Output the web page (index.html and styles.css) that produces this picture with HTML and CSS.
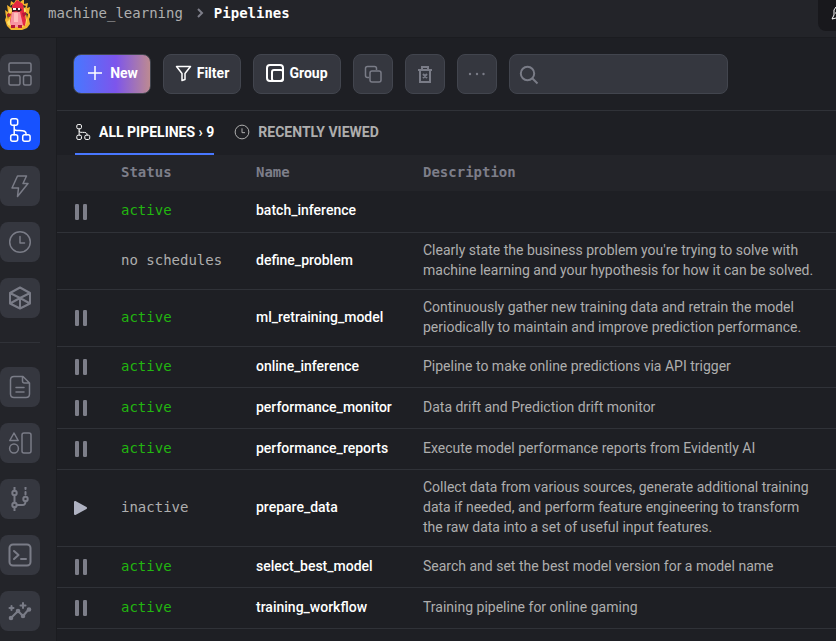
FILE: index.html
```html
<!DOCTYPE html>
<html lang="en">
<head>
<meta charset="utf-8">
<meta name="viewport" content="width=device-width, initial-scale=1">
<title>Pipelines</title>
<link rel="stylesheet" href="styles.css">
</head>
<body>
<svg class="defs" aria-hidden="true">
  <symbol id="tree" viewBox="0 0 24 24"><g fill="none" stroke="currentColor" stroke-width="1.5"><rect x="2.7" y=".8" width="7" height="6.4" rx="2"/><rect x="2.7" y="16.8" width="7" height="6.4" rx="2"/><rect x="14.7" y="16.8" width="7.4" height="6.4" rx="2"/><path d="M6.2 7.200v9.600M6.200 10c0 2.500 1.500 2.500 5 2.500 5 0 7 .5 7 4.300"/></g></symbol>
  <symbol id="clock" viewBox="0 0 24 24"><g fill="none" stroke="currentColor" stroke-width="1.5"><circle cx="12" cy="12" r="10.300"/><path d="M12 6.500V13h4.500"/></g></symbol>
  <symbol id="pause" viewBox="0 0 14 16"><rect x="1" width="4" height="16" rx="1.200"/><rect x="9" width="4" height="16" rx="1.200"/></symbol>
</svg>
<header class="topbar">
  <svg class="logo" viewBox="0 0 26 32" aria-label="Project logo" role="img">
    <path fill="#f5b52f" d="M3 28 1 22l1-3-1-7 3 2-1-7 3 2 1-6 3 2 3-5 3 4 4-3v5l4-1-1 5 3-1-1 6 2 2-2 4 1 5-3 4-5 2H7z"/>
    <path fill="#232429" d="m6 8 3-2-2 5zm13-1 3 1-2 4zM3 16l2 1-1 4zm19-1 2 1-1 4z"/>
    <path fill="#ffe16a" d="m3 24 3-3 1 7-3-1zm18-5 2 3-1 5-4 2zM5 12l2-3 1 4-3 4zm15-3 2 3-1 4-2-3z"/>
    <path fill="#e52842" d="m8 8 5-6 6 4 1 7 2 9-1 6-3-1-9 2-3-5 2-10z"/>
    <path fill="#f795a2" d="M8 14h8l3 13-4 2H8l-2-3z"/>
    <path fill="#391923" d="M8 10h8l2 2-3 2-3-1-4 1z"/>
    <path fill="#fff" d="M9 10h3v2H9zm5 0h2v2h-2z"/>
    <path fill="#b71839" d="m4 15 3 1-1 3-3-1zm14 0 4-1v3l-3 2zM7 27h4v3H7zm7 0h4v3h-4z"/>
    <path fill="#ffc0bd" d="M10 15h4v9h-4z"/>
  </svg>
  <nav class="crumbs" aria-label="Breadcrumb">
    <a href="#">machine_learning</a>
    <svg class="chevron" viewBox="0 0 10 12"><path d="m3 2 4 4-4 4"/></svg>
    <strong>Pipelines</strong>
  </nav>
  <button class="user" aria-label="Version"><svg viewBox="0 0 16 18"><path d="M5 2 3 5v5l-2 4 4-1m0-11 5 3v6l-4 3M4 8h4m-3 4 5 3"/></svg></button>
</header>
<div class="shell">
  <nav class="sidebar" aria-label="Main">
    <a href="#" aria-label="Overview"><svg viewBox="0 0 24 24"><rect x="1" y="1" width="22" height="9" rx="1.500"/><rect x="1" y="13.500" width="11" height="9.500" rx="1.500"/><rect x="15.500" y="13.500" width="7.500" height="9.500" rx="1.500"/></svg></a>
    <a href="#" class="current" aria-label="Pipelines"><svg><use href="#tree"/></svg></a>
    <a href="#" aria-label="Triggers"><svg viewBox="0 0 24 24"><path d="M9.500 2h9L15 9.500h5L9.500 22.500l1-8.500H4z"/></svg></a>
    <a href="#" aria-label="Runs"><svg><use href="#clock"/></svg></a>
    <a href="#" aria-label="Data products"><svg class="heavy" viewBox="0 0 24 24"><path d="m12 1.500 10 5.500v10.500L12 22.500 2 17.500V7zM12 12l10-5M12 12 2 7m10 5v10.500M12 12l10 5.500M12 12 2 17.500"/></svg></a>
    <hr>
    <a href="#" aria-label="Files"><svg viewBox="0 0 24 24"><path d="M6 1.500h9l6.500 6.500v11q0 3.500-3.500 3.500H6Q2.500 22.500 2.500 19V5Q2.500 1.500 6 1.500zM14.500 2v4q0 2 2 2h4.500M8 12.500h8M8 17h8"/></svg></a>
    <a href="#" aria-label="Templates"><svg viewBox="0 0 24 24"><path d="M6 2 1.800 9.500h8.400z"/><circle cx="6" cy="17.500" r="4.400"/><rect x="14" y="2" width="9" height="20" rx="2"/></svg></a>
    <a href="#" aria-label="Version control"><svg class="heavy" viewBox="0 0 24 24"><circle cx="6.500" cy="6" r="2.200"/><circle cx="6.500" cy="18" r="2.200"/><circle cx="17.500" cy="12" r="2.200"/><path d="M6.500 0v3.800m0 4.400v7.600m0 4.400v3.300M8.700 18h5.800q3 0 3-3.800M17.500 0v2m0 3v2.500"/></svg></a>
    <a href="#" aria-label="Terminal"><svg class="heavy" viewBox="0 0 24 24"><rect x="1.500" y="1.500" width="21" height="21" rx="3.500"/><path d="m6 8 4.500 4L6 16M13 16h5"/></svg></a>
    <a href="#" aria-label="Monitoring"><svg class="heavy" viewBox="0 0 24 24"><path d="m3 19 7-7 5 5 6-7"/><g fill="currentColor"><circle cx="3" cy="19" r="1.300"/><circle cx="10" cy="12" r="1.300"/><circle cx="15" cy="17" r="1.300"/><circle cx="21" cy="10.500" r="1.300"/></g><path d="M15 4v5m-2.500-2.500h5M3.500 7v4m-2-2h4"/></svg></a>
  </nav>
  <main>
    <div class="toolbar">
      <button class="btn primary"><svg class="plus" viewBox="0 0 14 14"><path d="M7 0v14M0 7h14"/></svg>New</button>
      <button class="btn filter"><svg viewBox="0 0 18 18"><path d="M1.500 2.500h14l-5.500 7v6l-3 1v-7z"/></svg>Filter</button>
      <button class="btn group"><svg viewBox="0 0 18 18"><rect x="1" y="1" width="16" height="16" rx="3"/><rect x="6" y="6" width="11" height="11" rx="2"/></svg>Group</button>
      <button class="btn icon" aria-label="Clone"><svg viewBox="0 0 18 18"><path d="M5 12.500H3.500Q1.500 12.500 1.500 10.500v-7q0-2 2-2h7q2 0 2 2V5"/><rect x="6" y="6" width="11" height="11" rx="2"/></svg></button>
      <button class="btn icon" aria-label="Delete"><svg class="bold" viewBox="0 0 18 18"><path d="M2 5h14M6 4V2h6v2M4 5v12h10V5M7 9l4 4m0-4-4 4"/></svg></button>
      <button class="btn icon" aria-label="More"><svg class="dots" viewBox="0 0 18 18"><circle cx="2" cy="9" r="1.200"/><circle cx="9" cy="9" r="1.200"/><circle cx="15.500" cy="9" r="1.200"/></svg></button>
      <label class="search"><svg viewBox="0 0 20 20"><circle cx="8.500" cy="8.500" r="6.700"/><path d="m13.500 13.500 5 5"/></svg><input type="search" aria-label="Search"></label>
    </div>
    <div class="tabs">
      <button class="tab selected"><svg><use href="#tree"/></svg>ALL PIPELINES › 9</button>
      <button class="tab"><svg><use href="#clock"/></svg>RECENTLY VIEWED</button>
    </div>
    <table>
      <colgroup><col class="c-action"><col class="c-status"><col class="c-name"><col></colgroup>
      <thead><tr><th></th><th>Status</th><th>Name</th><th>Description</th></tr></thead>
      <tbody>
        <tr><td><button aria-label="Pause"><svg><use href="#pause"/></svg></button></td><td class="on">active</td><td>batch_inference</td><td></td></tr>
        <tr><td></td><td>no schedules</td><td>define_problem</td><td>Clearly state the business problem you're trying to solve with<br>machine learning and your hypothesis for how it can be solved.</td></tr>
        <tr><td><button aria-label="Pause"><svg><use href="#pause"/></svg></button></td><td class="on">active</td><td>ml_retraining_model</td><td>Continuously gather new training data and retrain the model<br>periodically to maintain and improve prediction performance.</td></tr>
        <tr><td><button aria-label="Pause"><svg><use href="#pause"/></svg></button></td><td class="on">active</td><td>online_inference</td><td>Pipeline to make online predictions via API trigger</td></tr>
        <tr><td><button aria-label="Pause"><svg><use href="#pause"/></svg></button></td><td class="on">active</td><td>performance_monitor</td><td>Data drift and Prediction drift monitor</td></tr>
        <tr><td><button aria-label="Pause"><svg><use href="#pause"/></svg></button></td><td class="on">active</td><td>performance_reports</td><td>Execute model performance reports from Evidently AI</td></tr>
        <tr><td><button class="play" aria-label="Start"><svg viewBox="0 0 14 16"><path d="M1 2v12l11-6z"/></svg></button></td><td>inactive</td><td>prepare_data</td><td>Collect data from various sources, generate additional training<br>data if needed, and perform feature engineering to transform<br>the raw data into a set of useful input features.</td></tr>
        <tr><td><button aria-label="Pause"><svg><use href="#pause"/></svg></button></td><td class="on">active</td><td>select_best_model</td><td>Search and set the best model version for a model name</td></tr>
        <tr><td><button aria-label="Pause"><svg><use href="#pause"/></svg></button></td><td class="on">active</td><td>training_workflow</td><td>Training pipeline for online gaming</td></tr>
      </tbody>
    </table>
  </main>
</div>
</body>
</html>
```
FILE: styles.css
```css
* { box-sizing: border-box; }
body {
  margin: 0;
  min-height: 100vh;
  display: flex;
  flex-direction: column;
  background: #1e1f24;
  color: #aeaeae;
  font: 14px/20px Roboto, sans-serif;
}
button { font: inherit; color: inherit; background: none; border: 0; padding: 0; }
a { color: inherit; text-decoration: none; }
svg { display: block; flex: none; fill: none; stroke: currentColor; }
.defs { position: absolute; width: 0; height: 0; }

.topbar {
  display: flex;
  align-items: flex-start;
  height: 38px;
  padding-left: 4px;
  background: #232429;
  border-bottom: 1px solid #1b1c20;
  overflow: hidden;
}
.logo { width: 26px; height: 32px; margin-top: -2px; stroke: none; }
.crumbs {
  display: flex;
  align-items: center;
  height: 26px;
  margin-left: 18px;
  font-family: "DejaVu Sans Mono", monospace;
}
.crumbs strong { color: #fff; }
.chevron { width: 10px; height: 12px; margin: 0 9px 0 12px; stroke: #7d7e89; stroke-width: 2; }
.user {
  height: 31px;
  width: 48px;
  margin: 0 -30px 0 auto;
  padding-left: 13px;
  border-radius: 0 0 0 8px;
  background: #18181c;
  color: #fff;
}
.user svg { width: 16px; height: 18px; margin-bottom: 4px; }

.shell { display: flex; flex: 1; }
.sidebar {
  width: 57px;
  flex: none;
  display: flex;
  flex-direction: column;
  gap: 16px;
  padding-top: 16px;
  background: #232429;
  border-right: 1px solid #1b1c20;
}
.sidebar a {
  display: grid;
  place-items: center;
  width: 40px;
  height: 40px;
  border-radius: 8px;
  background: #35373f;
  color: #7a7c87;
}
.sidebar .current { background: #1752ff; color: #fff; }
.sidebar svg { width: 24px; height: 24px; stroke-width: 1.5; stroke-linejoin: round; stroke-linecap: round; }
.sidebar .heavy { stroke-width: 2; }
.sidebar hr { width: 40px; height: 1px; margin: 8px 0; border: 0; background: #303238; }

main { flex: 1; min-width: 0; }
.toolbar {
  display: flex;
  gap: 12px;
  padding: 16px;
  border-bottom: 1px solid #303238;
}
.btn {
  display: flex;
  align-items: center;
  justify-content: center;
  gap: 4px;
  height: 40px;
  padding-bottom: 2px;
  border: 1px solid #42454e;
  border-radius: 8px;
  background: #35373f;
  color: #fff;
  font-weight: 700;
}
.btn svg { width: 18px; height: 18px; stroke-width: 1.5; stroke-linejoin: round; }
.primary { gap: 8px; width: 78px; padding-left: 2px; background: linear-gradient(90deg, #4877ff, #7d55ec 55%, #bd8a91); }
.btn .plus { width: 14px; height: 14px; }
.filter { width: 78px; }
.group { width: 88px; gap: 5px; }
.group svg { stroke-width: 2; }
.icon { width: 40px; padding: 0; color: #7a7c87; }
.btn .bold { stroke-width: 2; stroke-linejoin: miter; }
.btn .dots { fill: currentColor; stroke: none; }
.search { position: relative; flex: 0 1 219px; }
.search svg { position: absolute; left: 10px; top: 11px; width: 20px; height: 20px; color: #7a7c87; stroke-width: 2; }
.search input {
  display: block;
  width: 100%;
  height: 40px;
  padding: 0 12px 0 40px;
  border: 1px solid #42454e;
  border-radius: 8px;
  background: #35373f;
  color: #fff;
  font: inherit;
}

.tabs { display: flex; gap: 20px; padding: 0 18px; }
.tab {
  display: flex;
  align-items: center;
  gap: 8px;
  height: 44px;
  border-bottom: 2px solid transparent;
  font-weight: 700;
}
.tab svg { width: 16px; height: 16px; }
.selected { color: #fff; border-color: #4877ff; }

table { width: 100%; border-collapse: collapse; table-layout: fixed; }
.c-action { width: 48px; }
.c-status { width: 135px; }
.c-name { width: 167px; }
th, td { padding: 7px 0 9px 16px; text-align: left; }
th {
  height: 36px;
  background: #232429;
  color: #7d7e89;
  font: 700 14px/20px "DejaVu Sans Mono", monospace;
}
td { height: 41px; border-bottom: 1px solid #303238; }
td:first-child { padding: 1px 0 0 17px; }
td:nth-child(2) { font-family: "DejaVu Sans Mono", monospace; }
td:nth-child(3) { color: #fff; font-weight: 500; }
td.on { color: #22b510; }
td button { display: block; }
td svg { width: 14px; height: 16px; fill: #7d7e89; stroke: none; }
.play svg { fill: #afb2c2; stroke: #afb2c2; stroke-width: 2; stroke-linejoin: round; }
```
